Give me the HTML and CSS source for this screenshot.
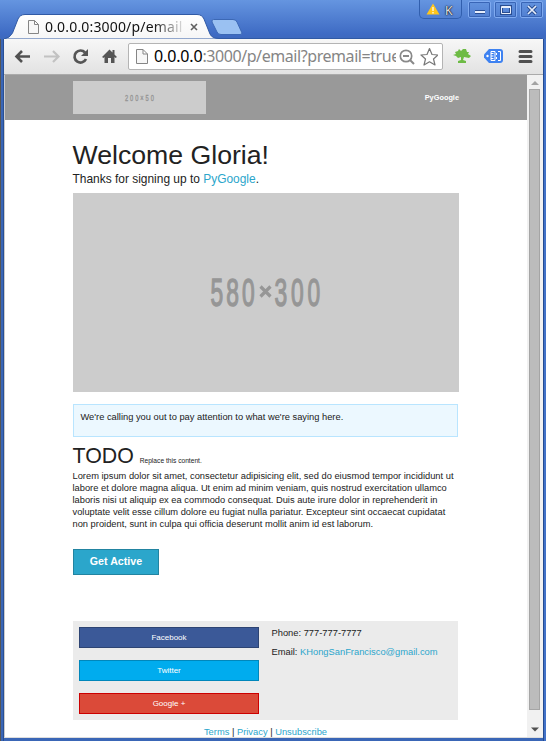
FILE: index.html
```html
<!DOCTYPE html>
<html lang="en">
<head>
<meta charset="utf-8">
<title>0.0.0.0:3000/p/email</title>
<link rel="stylesheet" href="styles.css">
</head>
<body>
<div class="window">
  <header class="tabstrip">
    <svg class="tab-shape" width="546" height="39" viewBox="0 0 546 39">
      <defs><linearGradient id="tab" x1="0" y1="0" x2="0" y2="1"><stop offset="0" stop-color="#fff"/><stop offset="1" stop-color="#f6f6f6"/></linearGradient></defs>
      <path d="M4 39Q10 38 12.500 33L18 19Q20 14.500 25 14.500H197Q202 14.500 204 19L210 34Q212 38.500 219 38.500H542V39Z" fill="url(#tab)" stroke="#315aa5"/>
      <path d="M213.500 19.500H233Q236 19.500 237 22L242 33Q242 34.500 240 34.500H221Q218 34.500 217 32L212 22Q211.500 19.500 213.500 19.500Z" fill="#9ac1f2" stroke="#3c68b5"/>
    </svg>
    <div class="tab">
      <svg class="doc" width="11" height="14" viewBox="0 0 11 14"><path d="M.5.500H6.500L10.500 4.500V13.500H.5ZM6.500.500V4.500H10.500" fill="#f7f7f7" stroke="#858585"/></svg>
      <span class="tab-title">0.0.0.0:3000/p/email</span>
      <svg class="tab-close" width="8" height="8" viewBox="0 0 8 8"><path d="M1 1L7 7M7 1L1 7" stroke="#606060" stroke-width="1.600"/></svg>
    </div>
    <div class="controls">
      <div class="profile">
        <svg width="14" height="12" viewBox="0 0 14 12"><path d="M7 .5L13.500 11.500H.5Z" fill="#ffc61c"/><path d="M7 4V8M7 9V10.500" stroke="#fff" stroke-width="1.200"/></svg>
        <span>K</span>
      </div>
      <div class="control"><svg width="12" height="12" viewBox="0 0 12 12"><path d="M1 8H11" stroke="#294d91" stroke-width="4"/><path d="M1 8H11" stroke="#e7eefb" stroke-width="2"/></svg></div>
      <div class="control"><svg width="12" height="12" viewBox="0 0 12 12"><rect x="1.500" y="2.500" width="9" height="7" fill="none" stroke="#294d91" stroke-width="3"/><path d="M1.500 2.500H10.500V9.500H1.500ZM1.500 3.500H10.500" fill="none" stroke="#e7eefb"/></svg></div>
      <div class="control"><svg width="12" height="12" viewBox="0 0 12 12"><path d="M2 2L10 10M10 2L2 10" stroke="#294d91" stroke-width="3.500"/><path d="M2 2L10 10M10 2L2 10" stroke="#e7eefb" stroke-width="1.700"/></svg></div>
    </div>
  </header>
  <nav class="toolbar">
    <svg class="nav-icons" width="115" height="35" viewBox="0 0 115 35">
      <path d="M26 17.500H13M18 12L12.500 17.500L18 23" fill="none" stroke="#515151" stroke-width="2.600"/>
      <path d="M40 17.500H53M49 12L54.500 17.500L49 23" fill="none" stroke="#c2c2c2" stroke-width="2.200"/>
      <path d="M81 13.500A6 6 0 1 0 82 20" fill="none" stroke="#555" stroke-width="2.700"/><path d="M84 10V17H77Z" fill="#555"/>
      <path d="M98 18L105.500 10.500L108.500 13.500V11H110.500V15.500L113 18L111.500 19L110.500 18V24H107V19H104V24H100.500V18L99.500 19Z" fill="#555"/>
    </svg>
    <div class="omnibox">
      <svg class="page-icon" width="12" height="15" viewBox="0 0 12 15"><path d="M.5.500H7L11.500 5V14.500H.5ZM7 .5V5H11.500" fill="#f7f7f7" stroke="#858585"/></svg>
      <div class="url"><b>0.0.0.0</b>:3000/p/email?premail=true</div>
      <svg class="omni-icons" width="42" height="22" viewBox="0 0 42 22">
        <circle cx="10" cy="10" r="5.700" fill="none" stroke="#898989" stroke-width="1.700"/><path d="M7 10H13M14 14L18 18" stroke="#898989" stroke-width="2"/>
        <path d="M33.500 2.500L36 8.500L42 9L37.500 13L39 19L33.500 15.800L28 19L29.500 13L25 9L31 8.500Z" fill="#fff" stroke="#777" stroke-width="1.200" stroke-linejoin="round"/>
      </svg>
    </div>
    <svg class="actions" width="96" height="35" viewBox="0 0 96 35">
      <path d="M10 16L13 15L12 13L15 12L16 10L18 12L20 10H23L24 13H26L25 15L28 17L26 19L21 18L20 21L23 22V24H15V22L18 21V18L15 19L13 17Z" fill="#6dbb45"/>
      <path d="M46 10H57Q60 10 60 13V21Q60 24 57 24H46L41 18.500V15.500Z" fill="#3e82f1"/><circle cx="44.500" cy="17" r="1.200" fill="#fff"/>
      <path d="M48 12.500H52V21.500H48ZM55 12.500H57.500V21.500H55" fill="none" stroke="#fff"/><path d="M48 14.500H50.500M48 17H50.500M48 19.500H50.500" stroke="#fff"/><path d="M53.500 14V16M53.500 18V20" stroke="#fff"/>
      <path d="M77 12.500H88M77 17.500H88M77 22.500H88" stroke="#505050" stroke-width="3" stroke-linecap="round"/>
    </svg>
  </nav>
  <div class="viewport">
    <main class="page">
      <div class="banner">
        <svg class="logo" width="133" height="33" viewBox="0 0 133 33"><rect width="133" height="33" fill="#ccc"/><g transform="translate(52 20) scale(.6 1)"><text x="0" y="0" textLength="48">200×50</text></g></svg>
        <strong>PyGoogle</strong>
      </div>
      <div class="content">
        <h1>Welcome Gloria!</h1>
        <p class="lead">Thanks for signing up to <a>PyGoogle</a>.</p>
        <svg class="hero" width="386" height="199" viewBox="0 0 386 199">
          <rect width="386" height="199" fill="#ccc"/>
          <g transform="translate(0 112.500) scale(.6 1)"><text x="229" y="0" textLength="74">580</text><text x="336" y="0" textLength="76">300</text></g>
          <path d="M187.500 93.500L197.500 103.500M197.500 93.500L187.500 103.500" stroke="#969696" stroke-width="3.200"/>
        </svg>
        <p class="callout">We're calling you out to pay attention to what we're saying here.</p>
        <h2>TODO <small>Replace this content.</small></h2>
        <p class="copy">Lorem ipsum dolor sit amet, consectetur adipisicing elit, sed do eiusmod tempor incididunt ut<br>labore et dolore magna aliqua. Ut enim ad minim veniam, quis nostrud exercitation ullamco<br>laboris nisi ut aliquip ex ea commodo consequat. Duis aute irure dolor in reprehenderit in<br>voluptate velit esse cillum dolore eu fugiat nulla pariatur. Excepteur sint occaecat cupidatat<br>non proident, sunt in culpa qui officia deserunt mollit anim id est laborum.</p>
        <a class="cta">Get Active</a>
        <section class="social">
          <div class="networks"><a class="facebook">Facebook</a><a class="twitter">Twitter</a><a class="google">Google +</a></div>
          <div class="contact"><p>Phone: 777-777-7777</p><p>Email: <a>KHongSanFrancisco@gmail.com</a></p></div>
        </section>
        <footer class="legal"><a>Terms</a> | <a>Privacy</a> | <a>Unsubscribe</a></footer>
      </div>
    </main>
    <aside class="scrollbar">
      <svg width="16" height="14" viewBox="0 0 16 14"><path d="M4 10L8 6L12 10Z" fill="#a3a3a3"/></svg>
      <div class="thumb"></div>
      <svg width="16" height="27" viewBox="0 0 16 27"><path d="M4 17.500H12L8 21.500Z" fill="#505050"/></svg>
    </aside>
  </div>
</div>
</body>
</html>
```
FILE: styles.css
```css
* { box-sizing: border-box; }
body { margin: 0; font-family: "Liberation Sans", Arial, sans-serif; }
h1, h2, p { margin: 0; font-weight: 400; }
svg { display: block; flex: none; }
.window { width: 546px; height: 741px; overflow: hidden; padding: 0 3px 3px 4px; background: linear-gradient(90deg, #555 0 1px, #3a66b6 1px 3px, #284f94 3px 4px, #3a66b6 4px 543px, #244b90 543px 544px, #4272c8 544px); }
.tabstrip { position: relative; display: flex; height: 39px; margin: 0 -3px 0 -4px; background: linear-gradient(#6595e0, #3e6bc4 34px, #3e69bd); }
.tab-shape { position: absolute; left: 0; top: 0; }
.tab { position: relative; display: flex; align-items: center; width: 204px; height: 26px; margin-top: 14px; padding-left: 28px; }
.doc { margin-right: 6px; }
.tab-title { width: 139px; height: 24px; overflow: hidden; white-space: nowrap; font: 14px/24px "Noto Sans", sans-serif; letter-spacing: .17px; background: linear-gradient(90deg, #111 0 108px, #d9d9d9 137px); background-clip: text; -webkit-background-clip: text; color: transparent; }
.tab-close { margin-left: 6px; }
.controls { position: relative; display: flex; gap: 3px; margin-left: auto; padding: 1px 3px 0 0; }
.profile { display: flex; align-items: center; gap: 5px; width: 43px; height: 19px; margin-right: 3px; padding-left: 6px; margin-top: -1px; border: 1px solid #315fae; border-top: 0; border-radius: 0 0 5px 5px; color: #e4e4e4; font: 12px/16px "Noto Sans", sans-serif; text-shadow: 0 0 2px #000, 0 0 1px #000; }
.profile span { margin-top: 3px; }
.control { display: grid; place-items: center; width: 23px; height: 17px; border: 1px solid #7faaf0; outline: 1px solid #3965b6; outline-offset: -2px; border-radius: 2px; }
.toolbar { display: flex; align-items: center; height: 36px; background: linear-gradient(#f7f7f7, #e2e2e2); border-bottom: 1px solid #aaa; }
.omnibox { display: flex; align-items: center; width: 315px; height: 27px; margin-left: 9px; padding-left: 7px; border: 1px solid #b4b4b4; border-radius: 2px; background: #fff; }
.page-icon { margin-right: 6px; }
.url { width: 242px; height: 26px; overflow: hidden; white-space: nowrap; color: #858585; font: 16px/25px "Noto Sans", sans-serif; letter-spacing: -.43px; }
.url b { font-weight: 400; color: #000; letter-spacing: -.15px; }
.viewport { display: flex; width: 539px; height: 663px; border-left: 1px solid #ccc; border-bottom: 1px solid #ddd; background: #fff; }
.page { width: 522px; overflow: hidden; color: #222; }
.page a { color: #2ba6cb; }
.banner { display: flex; align-items: center; justify-content: space-between; height: 45px; padding: 0 68px; background: #999; color: #fff; font-size: 7.35px; }
.logo text { font: 9.5px "Liberation Sans", sans-serif; fill: #969696; stroke: #969696; stroke-width: .4px; }
.content { width: 386px; margin: 18px 0 0 67.5px; }
h1 { font-size: 26.67px; line-height: 34px; height: 34px; }
.lead { font-size: 11.95px; line-height: 14px; }
.hero { margin: 7px 0 0 .5px; }
.hero text { font: 38px "Liberation Sans", sans-serif; fill: #969696; stroke: #969696; stroke-width: 1.400px; }
.callout { width: 385px; height: 33px; margin: 12px 0 0 .5px; padding: 6px 6.5px; border: 1px solid #b9e5ff; background: #ecf8ff; font-size: 9.32px; line-height: 12px; }
h2 { height: 26px; margin-top: 5px; font-size: 21.333px; line-height: 28px; }
h2 small { font-size: 6.667px; }
.copy { margin-top: 2px; font-size: 9.32px; line-height: 12px; white-space: nowrap; }
.page .cta { display: block; width: 86px; height: 26px; margin: 19px 0 0 .5px; border: 1px solid #2284a1; background: #2ba6cb; color: #fff; font-size: 10.667px; font-weight: 700; line-height: 23px; text-align: center; }
.social { display: flex; width: 385px; height: 99px; margin: 46px 0 0 .5px; padding: 6px; background: #ebebeb; }
.networks { display: grid; grid-template-rows: repeat(3, 21px); row-gap: 12px; width: 180px; }
.networks a { border: 1px solid; color: #fff; font-size: 8px; line-height: 19px; text-align: center; }
.page .networks a { color: #fff; }
.networks .facebook { background: #3b5998; border-color: #2d4473; }
.networks .twitter { background: #00acee; border-color: #0087bb; }
.networks .google { background: #db4a39; border-color: #c00; }
.contact { margin-left: 12.5px; font-size: 9.333px; line-height: 12px; }
.contact p { margin-bottom: 7px; }
.legal { margin-top: 6px; text-align: center; font-size: 9.333px; line-height: 12px; }
.scrollbar { display: flex; flex-direction: column; width: 16px; background: #f1f1f1; }
.thumb { width: 11px; height: 621px; margin-left: 2px; border: 1px solid #a5a5a5; background: #bcbcbc; }
```
